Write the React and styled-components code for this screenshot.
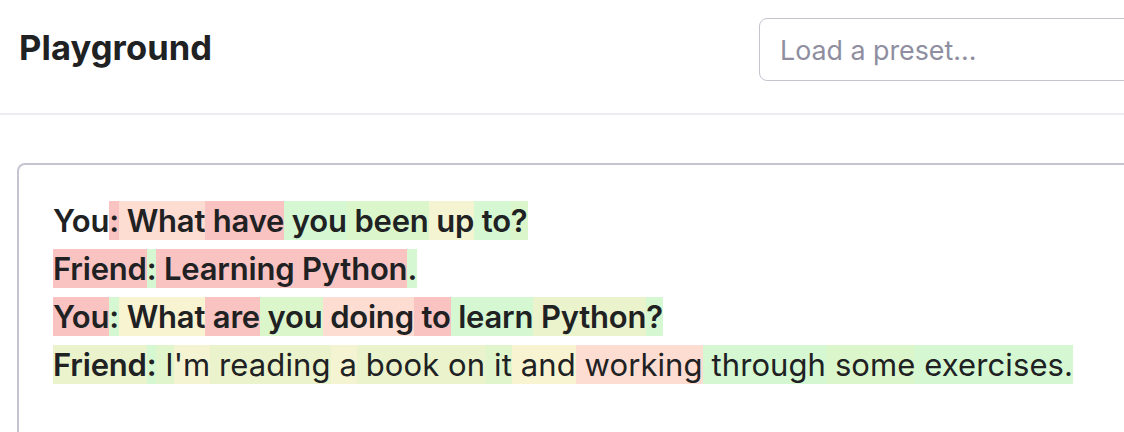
import React from "react";
import styled, { createGlobalStyle } from "styled-components";

const Global = createGlobalStyle`
  html, body { margin: 0; padding: 0; background: #fff; }
  body { font-family: Inter, "Noto Sans", sans-serif; color: #202123; overflow: hidden; }
`;

const Page = styled.div`
  width: 1124px;
  height: 432px;
  overflow: hidden;
`;

const Header = styled.header`
  display: flex;
  align-items: center;
  justify-content: space-between;
  height: 113px;
  padding: 0 0 0 19px;
  border-bottom: 2px solid #ececf1;
  box-sizing: content-box;
`;

const Title = styled.h1`
  margin: 0;
  margin-top: -18px;
  font-size: 34.5px;
  font-weight: 700;
  letter-spacing: 0.1px;
  color: #202123;
`;

const PresetInput = styled.input`
  align-self: flex-start;
  margin-top: 18px;
  margin-right: -40px;
  width: 405px;
  height: 63px;
  box-sizing: border-box;
  border: 1.5px solid #c5c5d2;
  border-radius: 8px;
  padding: 0 20px;
  font-family: Inter, "Noto Sans", sans-serif;
  font-size: 26.8px;
  color: #202123;
  outline: none;
  &::placeholder { color: #8e8ea0; }
`;

const Main = styled.main`
  padding: 48px 0 0 17px;
`;

const Panel = styled.section`
  border: 2px solid #c5c5d2;
  border-radius: 8px;
  margin-right: -40px;
  height: 400px;
  padding: 32px 0 0 34px;
`;

const Line = styled.div`
  font-size: 31px;
  line-height: 48px;
  white-space: pre;
`;

const colors = {
  red: "#f9c3c2",
  salmon: "#fddcd1",
  green: "#d5f8d2",
  lgreen: "#dcf6cb",
  yellow: "#f5f4d2",
  cream: "#f8f3d1",
  ygreen: "#eaf3cb",
  mgreen: "#e1f5cd",
  none: "transparent",
};

const Tok = styled.span`
  background: ${(p) => colors[p.$c]};
  font-weight: ${(p) => (p.$b ? 600 : 400)};
  letter-spacing: ${(p) => (p.$b ? "-0.2px" : "0.1px")};
  padding: 1px 0;
`;

const lines = [
  [["You", "none", 1], [":", "red", 1], [" What", "salmon", 1], [" have", "red", 1], [" you", "green", 1], [" been", "lgreen", 1], [" up", "yellow", 1], [" to", "green", 1], ["?", "lgreen", 1]],
  [["Friend", "red", 1], [":", "green", 1], [" Learning Python", "red", 1], [".", "green", 1]],
  [["You", "red", 1], [":", "green", 1], [" What", "cream", 1], [" are", "red", 1], [" you", "lgreen", 1], [" doing", "salmon", 1], [" to", "red", 1], [" learn", "green", 1], [" Python", "ygreen", 1], ["?", "green", 1]],
  [["Friend", "ygreen", 1], [":", "green", 1], [" I", "mgreen", 0], ["'m", "yellow", 0], [" reading", "ygreen", 0], [" a", "yellow", 0], [" book", "ygreen", 0], [" on", "ygreen", 0], [" it", "mgreen", 0], [" and", "cream", 0], [" working", "salmon", 0], [" through", "green", 0], [" some", "lgreen", 0], [" exercises", "green", 0], [".", "green", 0]],
];

export default function App() {
  return (
    <Page>
      <Global />
      <Header>
        <Title>Playground</Title>
        <PresetInput placeholder="Load a preset..." />
      </Header>
      <Main>
        <Panel>
          {lines.map((l, i) => (
            <Line key={i}>
              {l.map(([t, c, b], j) => (
                <Tok key={j} $c={c} $b={b}>{t}</Tok>
              ))}
            </Line>
          ))}
        </Panel>
      </Main>
    </Page>
  );
}
